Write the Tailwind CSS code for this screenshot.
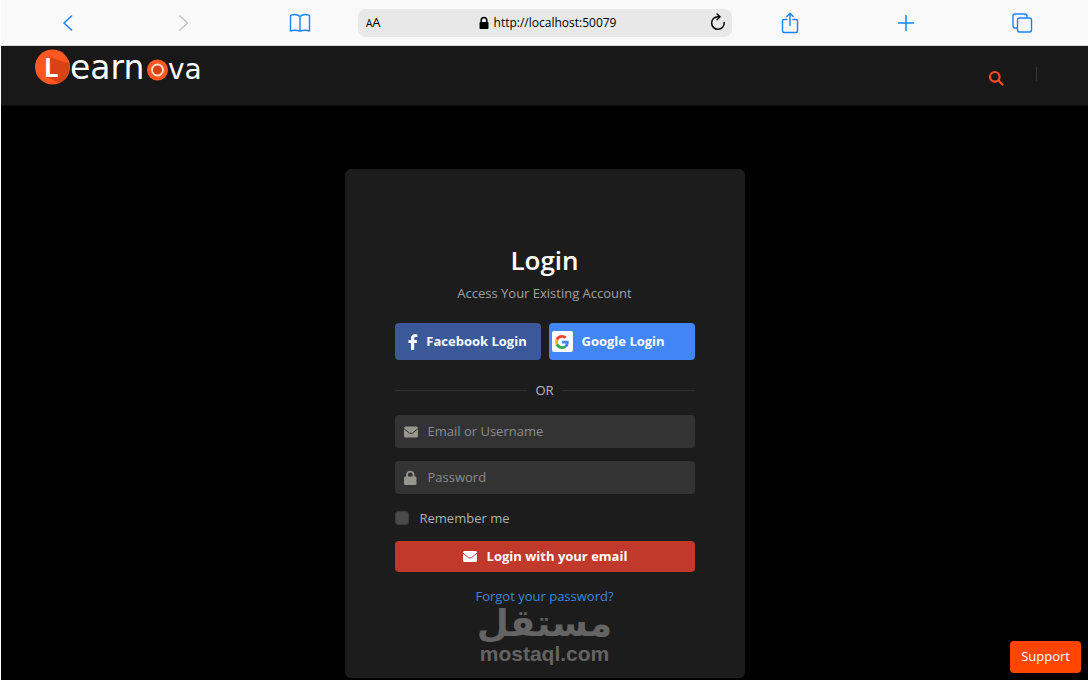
<!DOCTYPE html>
<html lang="en">
<head>
    <meta charset="UTF-8">
    <meta name="viewport" content="width=device-width, initial-scale=1.0">
    <title>Login - Learnova</title>
    <script src="https://cdn.jsdelivr.net/npm/@tailwindcss/browser@4"></script>
</head>
<body class="min-h-screen flex flex-col overflow-hidden bg-black border-l border-white font-['Open_Sans','Noto_Sans',sans-serif] text-[13px]">
    <!-- Browser Toolbar -->
    <div class="flex items-center h-[46px] pl-[9px] pr-2 bg-[#f9f9f9] border-b border-[#dcdcdc] text-[#1a84ff]">
        <button type="button" aria-label="Back" class="flex-1 flex justify-center">
            <svg class="w-6 h-6" viewBox="0 0 24 24" fill="none" stroke="currentColor" stroke-width="1.6" stroke-linecap="round" stroke-linejoin="round"><path d="M15.500 5 8 12l7.500 7"/></svg>
        </button>
        <button type="button" aria-label="Forward" class="flex-1 flex justify-center text-[#c4c4c8]">
            <svg class="w-6 h-6" viewBox="0 0 24 24" fill="none" stroke="currentColor" stroke-width="1.6" stroke-linecap="round" stroke-linejoin="round"><path d="m8 5 7.500 7L8 19"/></svg>
        </button>
        <button type="button" aria-label="Bookmarks" class="flex-1 flex justify-center">
            <svg class="w-6 h-6" viewBox="0 0 24 24" fill="none" stroke="currentColor" stroke-width="1.400" stroke-linejoin="round"><path d="M12 5.500C10.500 4 9 3.500 6.500 3.500c-1.500 0-2.700.2-4 1V20c1.300-.6 2.500-.8 4-.8 2.300 0 4 .2 5.500 1 1.500-.8 3.200-1 5.500-1 1.500 0 2.700.2 4 .8V4.500c-1.300-.8-2.500-1-4-1-2.500 0-4 .5-5.500 2v14.500"/></svg>
        </button>
        <div class="flex items-center w-[374px] h-7 px-2 rounded-lg bg-[#e8e8e8] text-black">
            <button type="button" aria-label="Text size" class="w-8 text-left leading-none"><span class="text-[10px]">A</span><span class="text-[13px]">A</span></button>
            <div class="flex-1 flex items-center justify-center gap-1 pl-1">
                <svg class="w-3 h-4" viewBox="0 0 12 16"><path d="M3.200 8V5.300a2.800 2.800 0 0 1 5.600 0V8" fill="none" stroke="currentColor" stroke-width="1.500"/><rect x="1.500" y="7" width="9" height="7" rx="1" fill="currentColor"/></svg>
                <span class="text-xs">http://localhost:50079</span>
            </div>
            <button type="button" aria-label="Reload" class="w-8 flex justify-end">
                <svg class="w-5 h-5 -mr-1" viewBox="0 0 20 20" fill="none" stroke="currentColor" stroke-width="1.500" stroke-linecap="round" stroke-linejoin="round"><path d="M16.200 9.500a6.300 6.300 0 1 1-6.200-5.800h1.500"/><path d="m9 1 3 2.800L9 6.700"/></svg>
            </button>
        </div>
        <button type="button" aria-label="Share" class="flex-1 flex justify-center">
            <svg class="w-6 h-6" viewBox="0 0 24 24" fill="none" stroke="currentColor" stroke-width="1.400" stroke-linecap="round" stroke-linejoin="round"><path d="M9 8.500H6A1.500 1.500 0 0 0 4.500 10v10A1.500 1.500 0 0 0 6 21.500h12a1.500 1.500 0 0 0 1.500-1.500V10A1.500 1.500 0 0 0 18 8.500h-3M12 14.500V3M8.800 5.500 12 2.300 15.200 5.500"/></svg>
        </button>
        <button type="button" aria-label="New tab" class="flex-1 flex justify-center">
            <svg class="w-6 h-6" viewBox="0 0 24 24" fill="none" stroke="currentColor" stroke-width="1.500" stroke-linecap="round"><path d="M12 4.500v15M4.500 12h15"/></svg>
        </button>
        <button type="button" aria-label="Tabs" class="flex-1 flex justify-center">
            <svg class="w-6 h-6" viewBox="0 0 24 24" fill="none" stroke="currentColor" stroke-width="1.400" stroke-linejoin="round"><rect x="7.500" y="7" width="14" height="14" rx="2"/><path d="M7.500 17H5a2 2 0 0 1-2-2V5a2 2 0 0 1 2-2h10a2 2 0 0 1 2 2v2"/></svg>
        </button>
    </div>

    <!-- Site Header -->
    <header class="flex justify-between h-[60px] pl-[34px] pr-[51px] bg-[#181818] border-b border-[#0d0d0d]">
        <a href="#" aria-label="Learnova home" class="pt-[3px]">
            <svg class="w-[170px] h-9 overflow-visible" viewBox="0 0 170 36" font-family="DejaVu Sans, sans-serif">
                <circle cx="17.500" cy="18" r="17.500" fill="#ff5722"/>
                <path d="M15 8 34 14.500A17.500 17.500 0 0 1 24 34.200L12 28Z" fill="#d84315"/>
                <text x="9" y="28" font-size="27" font-family="Lato, sans-serif" font-weight="700" fill="#fff">L</text>
                <text x="35" y="30" font-size="33" fill="#fff">earn</text>
                <circle cx="122.500" cy="21" r="10.500" fill="#ff5722"/>
                <circle cx="122.500" cy="21" r="5.500" fill="#d84315" stroke="#ffe0c8" stroke-width="1.800"/>
                <text x="133" y="30" font-size="28" fill="#fff">va</text>
            </svg>
        </a>
        <div class="flex items-center gap-8 pb-1">
            <button type="button" aria-label="Search" class="pt-2 text-[#ff4b1f]">
                <svg class="w-4 h-4" viewBox="0 0 16 16" fill="none" stroke="currentColor" stroke-width="2.200" stroke-linecap="round"><circle cx="6.800" cy="6.800" r="4.800"/><path d="m10.500 10.500 4 4"/></svg>
            </button>
            <span class="w-px h-3.5 bg-[#3c3638]"></span>
        </div>
    </header>

    <!-- Login Card -->
    <main class="flex-1 pt-[63px]">
        <form class="w-full max-w-[400px] mx-auto px-[50px] pt-[71px] pb-3 bg-[#1c1c1c] rounded-md text-center">
            <h1 class="text-[26px] leading-10 font-semibold text-white">Login</h1>
            <p class="mt-[3px] leading-5 text-[#a0a0a0]">Access Your Existing Account</p>

            <div class="grid grid-cols-2 gap-2 mt-5 font-bold text-white">
                <button type="button" class="flex items-center justify-center gap-2 h-[37px] rounded bg-[#3b5998]">
                    <svg class="w-2.5 h-4" viewBox="0 0 10 16" fill="currentColor"><path d="M3 16V9H.5V6H3V4.200C3 1.500 4.500.3 6.800.3c1.100 0 2 .1 2.500.2v2.600H7.800C6.500 3.100 6.200 3.800 6.200 4.600V6h3l-.5 3H6.200v7Z"/></svg>
                    Facebook Login
                </button>
                <button type="button" class="flex items-center gap-[9px] h-[37px] px-[3px] rounded bg-[#4285f4]">
                    <span class="flex items-center justify-center w-[21px] h-[21px] rounded-xs bg-white">
                        <svg class="w-3.5 h-3.5" viewBox="0 0 48 48"><path fill="#ea4335" d="M24 9.500c3.540 0 6.710 1.220 9.210 3.600l6.850-6.850C35.900 2.380 30.470 0 24 0 14.620 0 6.510 5.380 2.560 13.220l7.980 6.190C12.430 13.720 17.740 9.500 24 9.500z"/><path fill="#4285f4" d="M46.980 24.550c0-1.570-.15-3.090-.38-4.550H24v9.020h12.940c-.58 2.960-2.260 5.480-4.780 7.180l7.730 6c4.510-4.180 7.090-10.360 7.090-17.650z"/><path fill="#fbbc05" d="M10.530 28.590c-.48-1.450-.76-2.990-.76-4.590s.27-3.140.76-4.590l-7.980-6.190C.92 16.460 0 20.120 0 24s.92 7.540 2.560 10.780l7.970-6.190z"/><path fill="#34a853" d="M24 48c6.480 0 11.930-2.130 15.890-5.810l-7.730-6c-2.150 1.450-4.920 2.300-8.160 2.300-6.260 0-11.570-4.220-13.470-9.910l-7.980 6.190C6.510 42.620 14.620 48 24 48z"/></svg>
                    </span>
                    Google Login
                </button>
            </div>

            <div class="flex items-center gap-2 mt-5 leading-5 font-medium text-[#b8b8b8]">
                <span class="flex-1 h-px bg-[#303030]"></span>
                OR
                <span class="flex-1 h-px bg-[#303030]"></span>
            </div>

            <div class="flex flex-col gap-[13px] mt-[15px]">
                <label class="flex items-center gap-[9px] h-[33px] px-2 rounded bg-[#333] text-[#96968e]">
                    <svg class="w-4 h-4" viewBox="0 0 16 16"><rect x="1" y="2.500" width="14" height="11" rx="1.500" fill="currentColor"/><path d="M1 4.700 6.500 9.100q1.500 1 3 0L15 4.700" fill="none" stroke="#333"/></svg>
                    <input type="text" aria-label="Email or Username" placeholder="Email or Username" class="flex-1 min-w-0 outline-none placeholder:text-[#8c8c8c]">
                </label>
                <label class="flex items-center gap-[9px] h-[33px] px-2 rounded bg-[#333] text-[#96968e]">
                    <svg class="w-4 h-4" viewBox="0 0 16 16"><path d="M4 8V5a3.300 3.300 0 0 1 6.600 0v3" fill="none" stroke="currentColor" stroke-width="1.800"/><rect x="1" y="6.500" width="12.500" height="8.500" rx="1.500" fill="currentColor"/></svg>
                    <input type="password" aria-label="Password" placeholder="Password" class="flex-1 min-w-0 outline-none placeholder:text-[#8c8c8c]">
                </label>
            </div>

            <label class="flex items-center gap-[11px] mt-[14px] leading-5 text-[#b0b0b0]">
                <input type="checkbox" class="appearance-none w-3.5 h-3.5 rounded-[3px] border border-[#3c3c3c] bg-[#4a4a4a]">
                Remember me
            </label>

            <button type="submit" class="flex items-center justify-center gap-[9px] w-full h-[31px] mt-[13px] rounded bg-[#c0392b] font-bold text-white">
                <svg class="w-4 h-4" viewBox="0 0 16 16"><rect x="1" y="2" width="14" height="11" rx="1.500" fill="currentColor"/><path d="M1 4.200 6.500 8.600q1.500 1 3 0L15 4.200" fill="none" stroke="#c0392b"/></svg>
                Login with your email
            </button>

            <a href="#" class="block mt-[14px] leading-5 text-[#3a87dd]">Forgot your password?</a>

            <!-- Watermark -->
            <div class="text-[#646464] font-bold">
                <div lang="ar" dir="rtl" class="font-['DejaVu_Sans',sans-serif] text-[37px] leading-9">مستقل</div>
                <div class="font-['Liberation_Sans',sans-serif] text-[21px] leading-6">mostaql.com</div>
            </div>
        </form>
    </main>

    <button type="button" class="fixed right-[7px] bottom-[7px] h-8 px-[11px] rounded bg-[#ff4500] text-white">Support</button>
</body>
</html>
